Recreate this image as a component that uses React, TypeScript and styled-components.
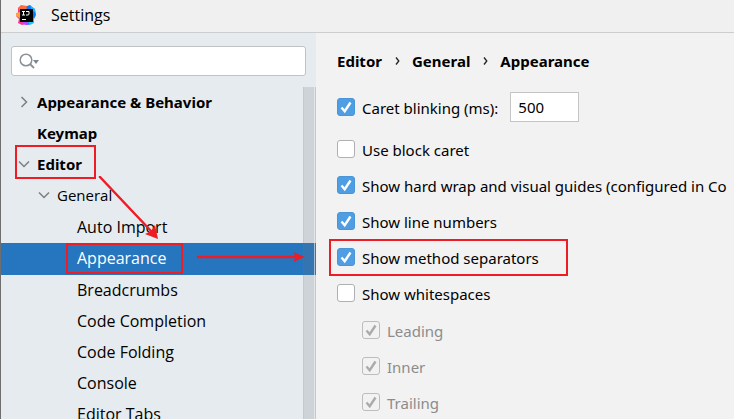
import React, { useState } from "react";
import styled, { createGlobalStyle, css } from "styled-components";

const GlobalStyle = createGlobalStyle`
  *, *::before, *::after { box-sizing: border-box; }
  body {
    margin: 0;
    background: #f2f2f2;
    color: #000;
    font: 15px/20px "Noto Sans", "Open Sans", sans-serif;
  }
  ul { list-style: none; margin: 0; padding: 0; }
`;

const Window = styled.div`
  display: flex;
  flex-direction: column;
  height: 100vh;
  overflow: hidden;
  border-left: 1px solid #6e6e71;
`;

const TitleBar = styled.header`
  display: flex;
  flex: none;
  align-items: center;
  gap: 14px;
  height: 33px;
  padding: 0 15px 2px;
  background: #f0f0f0;
  border-bottom: 1px solid #cbcdcf;
`;

const Title = styled.h1`
  margin: 0;
  font-family: "Open Sans", "Noto Sans", sans-serif;
  font-size: 16px;
  font-weight: 400;
  line-height: 20px;
`;

const Body = styled.div`
  display: flex;
  flex: 1;
  min-height: 0;
`;

const Sidebar = styled.aside`
  position: relative;
  display: flex;
  flex: none;
  flex-direction: column;
  width: 315px;
  padding-top: 13px;
  background: #e6ebef;
`;

const SearchField = styled.label`
  display: flex;
  flex: none;
  align-items: center;
  height: 30px;
  margin: 0 10px 11px 10px;
  padding-left: 7px;
  background: #fff;
  border: 1px solid #c0c3c6;
  border-radius: 3px;
`;

const SearchInput = styled.input`
  flex: 1;
  min-width: 0;
  border: 0;
  outline: 0;
  background: transparent;
  font: inherit;
`;

const TreeArea = styled.nav`
  position: relative;
  flex: 1;
  min-height: 0;
  overflow: hidden;
`;

const Leaves = styled.ul`
  padding-top: 1px;
`;

const indents = [16, 36, 76];

const TreeRow = styled.button<{ $level: number; $selected?: boolean }>`
  display: flex;
  align-items: center;
  gap: 7px;
  width: 100%;
  height: ${(p) => (p.$selected ? 32 : 31)}px;
  padding: 0 0 2px ${(p) => indents[p.$level]}px;
  border: 0;
  background: ${(p) => (p.$selected ? "#2675bf" : "transparent")};
  color: ${(p) => (p.$selected ? "#fff" : "#000")};
  font: inherit;
  ${(p) =>
    p.$level === 0
      ? css`
          font-weight: 700;
        `
      : css`
          font-family: "Open Sans", "Noto Sans", sans-serif;
          font-size: ${p.$level === 2 ? 16 : 15}px;
        `}
  text-align: left;
  white-space: nowrap;
`;

const ArrowSlot = styled.span`
  display: flex;
  flex: none;
  justify-content: center;
  width: 13px;
`;

const ScrollBar = styled.div`
  position: absolute;
  top: 0;
  right: 0;
  bottom: 0;
  width: 13px;
  background: rgba(110, 115, 122, 0.2);
  border-left: 1px solid rgba(110, 115, 122, 0.1);
  border-right: 1px solid rgba(110, 115, 122, 0.1);
  box-shadow: inset -1px 0 rgba(240, 243, 246, 0.6);
`;

const Marked = styled.span<{ $left: number; $right: number; $top: number; $bottom: number }>`
  position: relative;
  display: inline-flex;
  &::after {
    content: "";
    position: absolute;
    left: -${(p) => p.$left}px;
    right: -${(p) => p.$right}px;
    top: -${(p) => p.$top}px;
    bottom: -${(p) => p.$bottom}px;
    border: 2px solid #ee1c25;
    pointer-events: none;
  }
`;

const Arrows = styled.svg`
  position: absolute;
  top: 143px;
  left: 94px;
  pointer-events: none;
`;

const Panel = styled.main`
  flex: 1;
  min-width: 0;
  overflow: hidden;
  padding: 18px 0 0 21px;
  white-space: nowrap;
`;

const Crumbs = styled.ol`
  display: flex;
  align-items: center;
  gap: 12px;
  margin: 0 0 21px;
  padding: 0;
  list-style: none;
  font-weight: 700;
`;

const Crumb = styled.li`
  display: flex;
  align-items: center;
  gap: 13px;
`;

const FieldRow = styled.div`
  display: flex;
  align-items: center;
  gap: 12px;
  height: 30px;
  margin-bottom: 9px;
`;

const NumberInput = styled.input`
  width: 69px;
  height: 30px;
  padding: 0 7px 1px;
  background: #fff;
  border: 1px solid #c4c4c4;
  border-radius: 0;
  outline: 0;
  font: inherit;
`;

const OptionItem = styled.li`
  display: flex;
  align-items: center;
  height: 36px;
`;

const SubOptions = styled.ul`
  padding: 1px 0 0 25px;
`;

const OptionLabel = styled.label<{ $disabled?: boolean }>`
  display: inline-flex;
  align-items: center;
  gap: 7px;
  color: ${(p) => (p.$disabled ? "#8c8c8c" : "#000")};
`;

const OptionText = styled.span`
  padding-top: 1px;
`;

const BoxWrap = styled.span`
  position: relative;
  display: flex;
  flex: none;
  width: 18px;
  height: 18px;
`;

const Box = styled.input`
  appearance: none;
  width: 18px;
  height: 18px;
  margin: 0;
  background: #fff;
  border: 1px solid #b0b0b0;
  border-radius: 3px;
  &:checked {
    background: #4f9ee3;
    border-color: #4a95d8;
  }
  ${(p) =>
    p.disabled &&
    css`
      &,
      &:checked {
        background: #f2f2f2;
        border-color: #bdbdbd;
      }
    `}
`;

const Tick = styled.svg`
  position: absolute;
  inset: 0;
  pointer-events: none;
`;

function Logo() {
  return (
    <svg width="21" height="21" viewBox="0 0 21 21" aria-hidden="true">
      <path d="M2 3L5 1L9 1V19L6 20L2 18L3 14L0 11L2 8Z" fill="#ff318c" />
      <path d="M0 8L4 7V13L0 11Z" fill="#fda33a" />
      <path d="M5 0L11 1V6H4L2 3Z" fill="#fc6a3d" />
      <path d="M11 1L14 0L17 3L19 4L20 10L17 16L13 20L8 17Z" fill="#087cfa" />
      <path d="M14 0L19 4V7L16 6Z" fill="#22b8f5" />
      <path d="M7 16H13L12 20L10 20L6 19Z" fill="#b74af7" />
      <path d="M12 17L18 13L18 18L14 20Z" fill="#21c4f5" />
      <rect x="4" y="4" width="13" height="13" fill="#000" />
      <path d="M6 6.500h3M7.500 6v4M6 10h3M10 6.500h3v2.500q0 1-1 1h-2M6 14.500h4" stroke="#fff" fill="none" />
    </svg>
  );
}

function SearchIcon() {
  return (
    <svg width="21" height="16" viewBox="0 0 21 16" aria-hidden="true">
      <circle cx="7" cy="7" r="5.800" fill="none" stroke="#8a9197" strokeWidth="1.500" />
      <path d="M11 11l4 4" stroke="#8a9197" strokeWidth="1.800" />
      <path d="M14 7h6l-3 4z" fill="#7f868c" />
    </svg>
  );
}

function Chevron({ open }: { open: boolean }) {
  return open ? (
    <svg width="12" height="8" viewBox="0 0 12 8" aria-hidden="true">
      <path d="M1 1.500l5 5 5-5" fill="none" stroke="#7c7f82" strokeWidth="1.500" />
    </svg>
  ) : (
    <svg width="8" height="12" viewBox="0 0 8 12" aria-hidden="true">
      <path d="M1.500 1l5 5-5 5" fill="none" stroke="#7c7f82" strokeWidth="1.500" />
    </svg>
  );
}

function CrumbChevron() {
  return (
    <svg width="5" height="8" viewBox="0 0 5 8" aria-hidden="true">
      <path d="M1 0.500l2.800 3.500L1 7.500" fill="none" stroke="#222" strokeWidth="1.300" />
    </svg>
  );
}

interface OptionProps {
  label: string;
  checked?: boolean;
  disabled?: boolean;
  marked?: boolean;
}

function Option({ label, checked = false, disabled = false, marked = false }: OptionProps) {
  const [on, setOn] = useState(checked);
  const control = (
    <OptionLabel $disabled={disabled}>
      <BoxWrap>
        <Box type="checkbox" checked={on} disabled={disabled} onChange={() => setOn(!on)} />
        {on && (
          <Tick width="18" height="18" viewBox="0 0 18 18" aria-hidden="true">
            <path
              d="M4.500 9.500l3.200 3.700L13.500 4.500"
              fill="none"
              stroke={disabled ? "#ababab" : "#fff"}
              strokeWidth="2.400"
            />
          </Tick>
        )}
      </BoxWrap>
      <OptionText>{label}</OptionText>
    </OptionLabel>
  );
  return marked ? (
    <Marked $left={8} $right={29} $top={8} $bottom={8}>
      {control}
    </Marked>
  ) : (
    control
  );
}

const leaves = [
  "Auto Import",
  "Appearance",
  "Breadcrumbs",
  "Code Completion",
  "Code Folding",
  "Console",
  "Editor Tabs",
];

const options: OptionProps[] = [
  { label: "Use block caret" },
  { label: "Show hard wrap and visual guides (configured in Co", checked: true },
  { label: "Show line numbers", checked: true },
  { label: "Show method separators", checked: true, marked: true },
  { label: "Show whitespaces" },
];

export default function App() {
  return (
    <>
      <GlobalStyle />
      <Window>
        <TitleBar>
          <Logo />
          <Title>Settings</Title>
        </TitleBar>
        <Body>
          <Sidebar>
            <SearchField>
              <SearchIcon />
              <SearchInput type="text" aria-label="Search settings" />
            </SearchField>
            <TreeArea>
              <ul>
                <li>
                  <TreeRow $level={0}>
                    <ArrowSlot>
                      <Chevron open={false} />
                    </ArrowSlot>
                    Appearance &amp; Behavior
                  </TreeRow>
                </li>
                <li>
                  <TreeRow $level={0}>
                    <ArrowSlot />
                    Keymap
                  </TreeRow>
                </li>
                <li>
                  <TreeRow $level={0}>
                    <ArrowSlot>
                      <Chevron open />
                    </ArrowSlot>
                    <Marked $left={22} $right={14} $top={9} $bottom={5}>
                      Editor
                    </Marked>
                  </TreeRow>
                  <TreeRow $level={1}>
                    <ArrowSlot>
                      <Chevron open />
                    </ArrowSlot>
                    General
                  </TreeRow>
                  <Leaves>
                    {leaves.map((name) => (
                      <li key={name}>
                        {name === "Appearance" ? (
                          <TreeRow $level={2} $selected aria-current="page">
                            <Marked $left={11} $right={17} $top={5} $bottom={6}>
                              {name}
                            </Marked>
                          </TreeRow>
                        ) : (
                          <TreeRow $level={2}>{name}</TreeRow>
                        )}
                      </li>
                    ))}
                  </Leaves>
                </li>
              </ul>
              <ScrollBar />
            </TreeArea>
            <Arrows width="216" height="94" viewBox="0 0 216 94" aria-hidden="true">
              <g stroke="#ee1c25" strokeWidth="2.500" fill="none" strokeLinecap="round">
                <path d="M5 1L56 55" />
                <path d="M103 81H202" />
              </g>
              <path d="M63 63L60 49L56 55L50 58Z" fill="#ee1c25" />
              <path d="M210 81L198 76L201 81L198 86Z" fill="#ee1c25" />
            </Arrows>
          </Sidebar>
          <Panel>
            <Crumbs>
              <Crumb>
                Editor <CrumbChevron />
              </Crumb>
              <Crumb>
                General <CrumbChevron />
              </Crumb>
              <Crumb aria-current="page">Appearance</Crumb>
            </Crumbs>
            <FieldRow>
              <Option label="Caret blinking (ms):" checked />
              <NumberInput type="text" aria-label="Caret blinking (ms)" defaultValue="500" />
            </FieldRow>
            <ul>
              {options.map((option) => (
                <OptionItem key={option.label}>
                  <Option {...option} />
                </OptionItem>
              ))}
            </ul>
            <SubOptions>
              {["Leading", "Inner", "Trailing"].map((label) => (
                <OptionItem key={label}>
                  <Option label={label} checked disabled />
                </OptionItem>
              ))}
            </SubOptions>
          </Panel>
        </Body>
      </Window>
    </>
  );
}
